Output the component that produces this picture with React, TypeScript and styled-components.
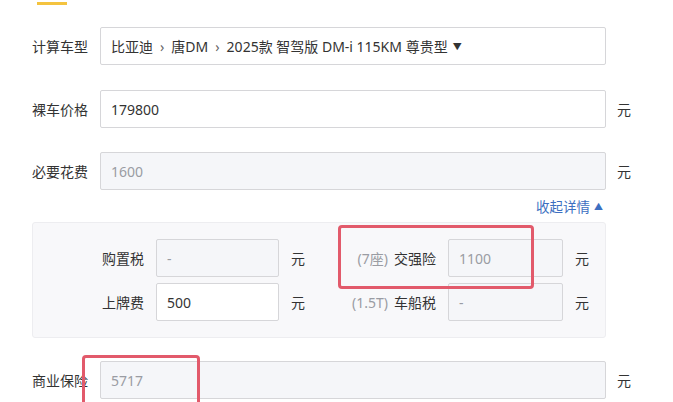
import React from 'react';
import styled, { createGlobalStyle } from 'styled-components';

const GlobalStyle = createGlobalStyle`
  html, body {
    margin: 0;
    padding: 0;
    background: #fff;
    overflow: hidden;
  }
  body {
    font-family: "Noto Sans", "Noto Sans CJK SC", sans-serif;
    color: #333;
  }
`;

const Page = styled.div`
  width: 673px;
  height: 402px;
  overflow: hidden;
  padding: 2px 0 0 32px;
  box-sizing: border-box;
  display: flex;
  flex-direction: column;
`;

const Accent = styled.div`
  width: 30px;
  height: 3px;
  margin-left: 5px;
  background: #f4c33f;
  margin-bottom: 22px;
  flex: none;
`;

const Row = styled.div<{ gap?: number }>`
  position: relative;
  display: flex;
  align-items: center;
  height: 38px;
  flex: none;
  margin-bottom: ${p => p.gap ?? 0}px;
`;

const Label = styled.div`
  width: 68px;
  flex: none;
  font-size: 14px;
  color: #333;
  white-space: nowrap;
`;

const Box = styled.div<{ disabled?: boolean; width?: number }>`
  box-sizing: border-box;
  width: ${p => (p.width ? `${p.width}px` : '506px')};
  flex: none;
  height: 38px;
  display: flex;
  align-items: center;
  padding: 0 10px;
  border: 1px solid #d6d6d9;
  border-radius: 2px;
  background: ${p => (p.disabled ? '#f5f6f9' : '#fff')};
  color: ${p => (p.disabled ? '#9a9ca3' : '#333')};
  font-size: 14px;
  white-space: nowrap;
`;

const Sep = styled.span`
  margin: 0 7px;
  color: #666;
`;

const Caret = styled.span`
  font-size: 9px;
  margin-left: 5px;
  color: #333;
`;

const Unit = styled.span`
  font-size: 14px;
  color: #333;
  margin-left: 11px;
`;

const ToggleLine = styled.div`
  width: 574px;
  display: flex;
  justify-content: flex-end;
  align-items: center;
  height: 32px;
  flex: none;
  font-size: 13.5px;
  color: #3d6fc1;
  box-sizing: border-box;
  padding-right: 3px;
`;

const Arrow = styled.span`
  font-size: 9px;
  margin-left: 4px;
`;

const Panel = styled.div`
  position: relative;
  flex: none;
  box-sizing: border-box;
  width: 574px;
  height: 116px;
  padding: 16px 0;
  background: #f8f8fa;
  border: 1px solid #ededf0;
  border-radius: 3px;
  display: grid;
  grid-template-columns: 111px 123px 18px 115px 115px auto;
  grid-auto-rows: 38px;
  column-gap: 12px;
  row-gap: 6px;
  align-items: center;
  margin-bottom: 23px;
`;

const SubLabel = styled.div`
  font-size: 14px;
  color: #333;
  text-align: right;
  white-space: nowrap;
`;

const Hint = styled.span`
  color: #9a9ca3;
  margin-right: 6px;
`;

const SubUnit = styled.span`
  font-size: 14px;
  color: #333;
`;

const Mark = styled.div<{ left: number; top: number; w: number; h: number }>`
  position: absolute;
  left: ${p => p.left}px;
  top: ${p => p.top}px;
  width: ${p => p.w}px;
  height: ${p => p.h}px;
  box-sizing: border-box;
  border: 3px solid #e25a6b;
  border-radius: 4px;
  pointer-events: none;
`;

const Outer = styled.div`
  position: relative;
  flex: none;
`;

export default function App() {
  return (
    <>
      <GlobalStyle />
      <Page>
        <Accent />
        <Row gap={25}>
          <Label>计算车型</Label>
          <Box>
            比亚迪<Sep>›</Sep>唐DM<Sep>›</Sep>2025款 智驾版 DM-i 115KM 尊贵型
            <Caret>▼</Caret>
          </Box>
        </Row>
        <Row gap={24}>
          <Label>裸车价格</Label>
          <Box>179800</Box>
          <Unit>元</Unit>
        </Row>
        <Row>
          <Label>必要花费</Label>
          <Box disabled>1600</Box>
          <Unit>元</Unit>
        </Row>
        <ToggleLine>
          收起详情<Arrow>▲</Arrow>
        </ToggleLine>
        <Panel>
          <SubLabel>购置税</SubLabel>
          <Box disabled width={123}>-</Box>
          <SubUnit>元</SubUnit>
          <SubLabel>
            <Hint>(7座)</Hint>交强险
          </SubLabel>
          <Box disabled width={115}>1100</Box>
          <SubUnit>元</SubUnit>

          <SubLabel>上牌费</SubLabel>
          <Box width={123}>500</Box>
          <SubUnit>元</SubUnit>
          <SubLabel>
            <Hint>(1.5T)</Hint>车船税
          </SubLabel>
          <Box disabled width={115}>-</Box>
          <SubUnit>元</SubUnit>

          <Mark left={305} top={2} w={196} h={64} />
        </Panel>
        <Outer>
          <Row>
            <Label>商业保险</Label>
            <Box disabled>5717</Box>
            <Unit>元</Unit>
          </Row>
          <Mark left={50} top={-6} w={118} h={60} />
        </Outer>
      </Page>
    </>
  );
}
